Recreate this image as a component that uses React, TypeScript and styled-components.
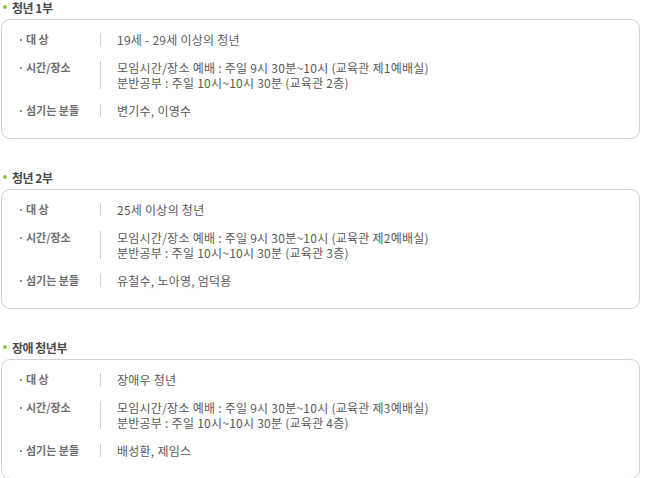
import React from "react";
import styled, { createGlobalStyle } from "styled-components";

const Global = createGlobalStyle`
  html, body { margin: 0; padding: 0; background: #fff; }
  body { font-family: "Noto Sans CJK KR", "Noto Sans", sans-serif; }
`;

const Page = styled.div`
  width: 650px;
  display: flex;
  flex-direction: column;
  gap: 31px;
`;

const Section = styled.section`
  display: flex;
  flex-direction: column;
  gap: 5px;
`;

const Title = styled.h3`
  margin: 0;
  display: flex;
  align-items: center;
  height: 14px;
  padding-left: 3px;
  font-size: 12px;
  font-weight: 700;
  color: #4a4a4a;
  letter-spacing: -0.5px;
  &::before {
    content: "";
    width: 4px;
    height: 4px;
    border-radius: 50%;
    background: #8cc63f;
    margin-right: 5px;
  }
`;

const Box = styled.div`
  margin-left: 1px;
  width: 639px;
  box-sizing: border-box;
  height: 120px;
  border: 1px solid #d2d2d2;
  border-radius: 9px;
  padding: 12px 0 0 16px;
  display: flex;
  flex-direction: column;
  gap: 13px;
`;

const Row = styled.div`
  display: flex;
  align-items: stretch;
`;

const Label = styled.div`
  width: 82px;
  font-size: 11px;
  font-weight: 700;
  line-height: 15px;
  color: #6e6e6e;
  letter-spacing: 0;
  white-space: pre;
  &::before {
    content: "";
    display: inline-block;
    width: 2px;
    height: 2px;
    background: #8a8a8a;
    vertical-align: middle;
    margin: 0 4px 2px 2px;
  }
`;

const Sep = styled.div`
  width: 1px;
  background: #cfcfcf;
  margin: 1px 0;
`;

const Value = styled.div`
  padding-left: 16px;
  font-size: 12px;
  line-height: 15px;
  color: #5a5a5a;
  letter-spacing: 0.25px;
  display: flex;
  flex-direction: column;
`;

const Line = styled.span`
  display: block;
  height: 15px;
`;

type Item = { label: string; lines: string[] };
type Group = { title: string; items: Item[] };

const groups: Group[] = [
  {
    title: "청년 1부",
    items: [
      { label: "대 상", lines: ["19세 - 29세 이상의 청년"] },
      {
        label: "시간/장소",
        lines: [
          "모임시간/장소 예배 : 주일 9시 30분~10시 (교육관 제1예배실)",
          "분반공부 : 주일 10시~10시 30분 (교육관 2층)",
        ],
      },
      { label: "섬기는 분들", lines: ["변기수, 이영수"] },
    ],
  },
  {
    title: "청년 2부",
    items: [
      { label: "대 상", lines: ["25세 이상의 청년"] },
      {
        label: "시간/장소",
        lines: [
          "모임시간/장소 예배 : 주일 9시 30분~10시 (교육관 제2예배실)",
          "분반공부 : 주일 10시~10시 30분 (교육관 3층)",
        ],
      },
      { label: "섬기는 분들", lines: ["유철수, 노아영, 엄덕용"] },
    ],
  },
  {
    title: "장애 청년부",
    items: [
      { label: "대 상", lines: ["장애우 청년"] },
      {
        label: "시간/장소",
        lines: [
          "모임시간/장소 예배 : 주일 9시 30분~10시 (교육관 제3예배실)",
          "분반공부 : 주일 10시~10시 30분 (교육관 4층)",
        ],
      },
      { label: "섬기는 분들", lines: ["배성환, 제임스"] },
    ],
  },
];

export default function App() {
  return (
    <>
      <Global />
      <Page>
        {groups.map((g) => (
          <Section key={g.title}>
            <Title>{g.title}</Title>
            <Box>
              {g.items.map((it) => (
                <Row key={it.label}>
                  <Label>{it.label}</Label>
                  <Sep />
                  <Value>
                    {it.lines.map((l) => (
                      <Line key={l}>{l}</Line>
                    ))}
                  </Value>
                </Row>
              ))}
            </Box>
          </Section>
        ))}
      </Page>
    </>
  );
}
